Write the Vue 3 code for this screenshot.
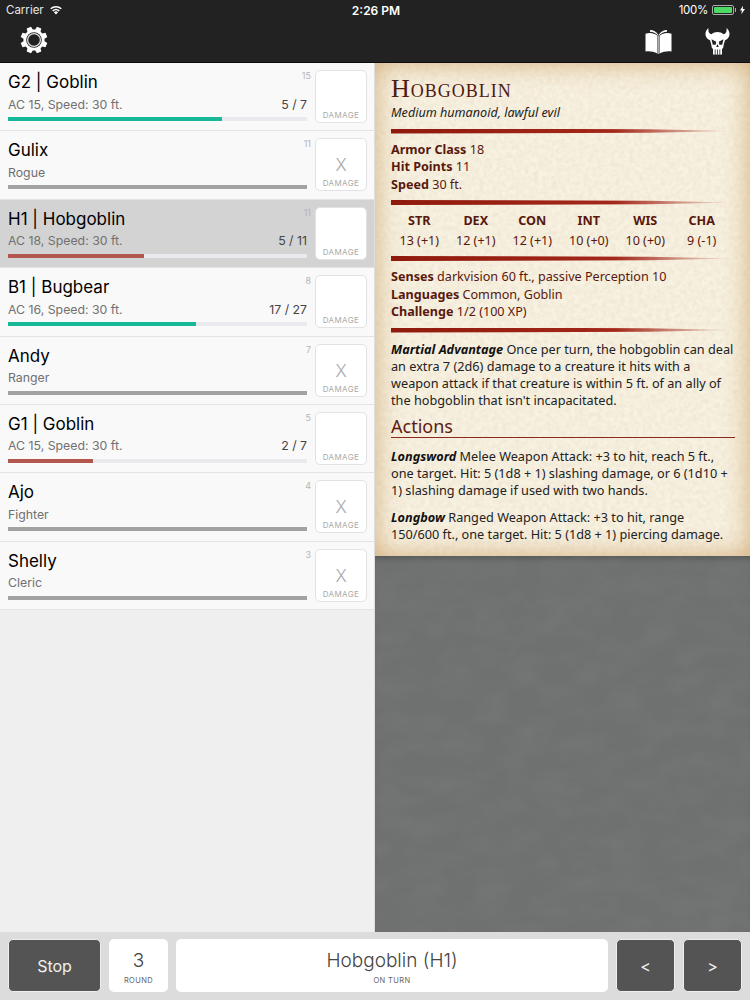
<template>
  <div class="app">
    <header class="top">
      <div class="status">
        <div class="status-left">
          <span>Carrier</span>
          <svg class="wifi" width="14" height="10" viewBox="0 0 14 10">
            <path d="M7 9.600 4.900 7.200a3 3 0 0 1 4.200 0Z" fill="#fff" />
            <path d="M3.700 5.900a5 5 0 0 1 6.600 0" stroke="#fff" stroke-width="1.500" fill="none" />
            <path d="M1.700 3.700a8 8 0 0 1 10.600 0" stroke="#fff" stroke-width="1.500" fill="none" />
          </svg>
        </div>
        <div class="clock">2:26 PM</div>
        <div class="status-right">
          <span class="percent">100%</span>
          <span class="battery"><i></i></span>
          <span class="nub"></span>
          <svg class="bolt" width="5" height="10" viewBox="0 0 6 10"><path d="M3.600 0 0 5.600h2.300L1.600 10 6 3.800H3.400Z" fill="#fff" /></svg>
        </div>
      </div>
      <div class="toolbar">
        <svg class="gear" width="28" height="28" viewBox="0 0 28 28">
          <path :d="gearPath" fill="#fff" />
          <circle cx="14" cy="14" r="7.800" fill="#222" />
          <circle cx="14" cy="14" r="6.400" fill="none" stroke="#ddd" stroke-width="1.300" />
        </svg>
        <div class="toolbar-right">
          <svg width="27" height="25" viewBox="0 0 27 25">
            <path d="M.5 4.800C4 3.500 9 3.500 12.400 6.800V24.500C9 22.500 4 22 .5 22.500Z" fill="#fff" />
            <path d="M26.500 4.800C23 3.500 18 3.500 14.600 6.800V24.500C18 22.500 23 22 26.500 22.500Z" fill="#fff" />
            <path d="M5 1C8.500 1 11.500 2.500 13.200 5.800V6.800C11 4 8 2.800 5 2.800ZM22 1C18.500 1 15.500 2.500 13.800 5.800V6.800C16 4 19 2.800 22 2.800Z" fill="#fff" />
            <rect x="12.600" y="6.500" width="1.800" height="18.500" fill="#aaa" />
          </svg>
          <svg class="skull" width="25" height="27" viewBox="0 0 25 27">
            <path d="M3.500 0C.5 2.500-.5 6.500 1.500 9.500C2.500 11 3.800 11.800 5 12.200L6 15.500 7 20.500H18L19 15.500 20 12.200C21.200 11.800 22.500 11 23.500 9.500C25.500 6.500 24.500 2.500 21.500 0C22 3.500 21 5.500 18.500 6.300C16.800 4.800 14.800 4 12.500 4S8.200 4.800 6.500 6.300C4 5.500 3 3.500 3.500 0Z" fill="#fff" />
            <path d="M8 20h9v6.500H8Z" fill="#fff" />
            <path d="M6.500 11.300 11.200 13.800 10.700 16.800H7.800ZM18.500 11.300 13.800 13.800 14.300 16.800H17.200ZM12.500 16 13.800 19H11.200Z" fill="#222" />
            <path d="M10.200 21.500v5M12.500 21.500v5M14.800 21.500v5" stroke="#222" stroke-width=".8" />
          </svg>
        </div>
      </div>
    </header>

    <main class="main">
      <section class="list">
        <div v-for="c in combatants" :key="c.name" class="row" :class="{ active: c.active }">
          <div class="row-info">
            <div class="name">{{ c.name }}</div>
            <div class="sub-line">
              <span>{{ c.sub }}</span>
              <span v-if="c.hp" class="hp">{{ c.hp }} / {{ c.max }}</span>
            </div>
            <div class="track">
              <div class="fill" :class="barClass(c)" :style="{ width: barWidth(c) }"></div>
            </div>
          </div>
          <div class="init">{{ c.init }}</div>
          <div class="damage">
            <span class="x">{{ c.hp ? '' : 'X' }}</span>
            <span class="damage-label">DAMAGE</span>
          </div>
        </div>
      </section>

      <section class="detail">
        <article class="sheet">
          <svg class="grain" width="100%" height="100%">
            <filter id="paper">
              <feTurbulence type="fractalNoise" baseFrequency="0.22" numOctaves="3" seed="4" />
              <feColorMatrix values="0 0 0 0 0.55  0 0 0 0 0.42  0 0 0 0 0.25  0.2 0.2 0 0 -0.14" />
            </filter>
            <rect width="100%" height="100%" filter="url(#paper)" />
          </svg>
          <div class="sheet-body">
            <h1>Hobgoblin</h1>
            <p class="kind">Medium humanoid, lawful evil</p>
            <div class="rule"></div>
            <p class="prop"><b>Armor Class</b> 18</p>
            <p class="prop"><b>Hit Points</b> 11</p>
            <p class="prop"><b>Speed</b> 30 ft.</p>
            <div class="rule"></div>
            <div class="stats">
              <div v-for="s in stats" :key="s.k" class="stat">
                <b>{{ s.k }}</b>
                <span>{{ s.v }}</span>
              </div>
            </div>
            <div class="rule"></div>
            <p class="prop"><b>Senses</b> darkvision 60 ft., passive Perception 10</p>
            <p class="prop"><b>Languages</b> Common, Goblin</p>
            <p class="prop"><b>Challenge</b> 1/2 (100 XP)</p>
            <div class="rule last"></div>
            <p class="trait"><b><i>Martial Advantage</i></b> Once per turn, the hobgoblin can deal an extra 7 (2d6) damage to a creature it hits with a weapon attack if that creature is within 5 ft. of an ally of the hobgoblin that isn't incapacitated.</p>
            <h2>Actions</h2>
            <p class="trait"><b><i>Longsword</i></b> Melee Weapon Attack: +3 to hit, reach 5 ft., one target. Hit: 5 (1d8 + 1) slashing damage, or 6 (1d10 + 1) slashing damage if used with two hands.</p>
            <p class="trait"><b><i>Longbow</i></b> Ranged Weapon Attack: +3 to hit, range 150/600 ft., one target. Hit: 5 (1d8 + 1) piercing damage.</p>
          </div>
        </article>
        <div class="slate">
          <svg class="grain" width="100%" height="100%">
            <filter id="slate">
              <feTurbulence type="fractalNoise" baseFrequency="0.03 0.05" numOctaves="5" seed="9" />
              <feColorMatrix values="0 0 0 0 0.25  0 0 0 0 0.25  0 0 0 0 0.25  0.25 0.25 0 0 -0.2" />
            </filter>
            <rect width="100%" height="100%" filter="url(#slate)" />
          </svg>
        </div>
      </section>
    </main>

    <footer class="bottom">
      <button class="btn stop">Stop</button>
      <div class="panel round">
        <div class="value">3</div>
        <div class="caption">ROUND</div>
      </div>
      <div class="panel turn">
        <div class="value">Hobgoblin (H1)</div>
        <div class="caption">ON TURN</div>
      </div>
      <button class="btn nav">&lt;</button>
      <button class="btn nav">&gt;</button>
    </footer>
  </div>
</template>

<script setup>
const combatants = [
  { name: 'G2 | Goblin', sub: 'AC 15, Speed: 30 ft.', hp: 5, max: 7, init: 15 },
  { name: 'Gulix', sub: 'Rogue', init: 11 },
  { name: 'H1 | Hobgoblin', sub: 'AC 18, Speed: 30 ft.', hp: 5, max: 11, init: 11, active: true },
  { name: 'B1 | Bugbear', sub: 'AC 16, Speed: 30 ft.', hp: 17, max: 27, init: 8 },
  { name: 'Andy', sub: 'Ranger', init: 7 },
  { name: 'G1 | Goblin', sub: 'AC 15, Speed: 30 ft.', hp: 2, max: 7, init: 5 },
  { name: 'Ajo', sub: 'Fighter', init: 4 },
  { name: 'Shelly', sub: 'Cleric', init: 3 }
]

const stats = [
  { k: 'STR', v: '13 (+1)' },
  { k: 'DEX', v: '12 (+1)' },
  { k: 'CON', v: '12 (+1)' },
  { k: 'INT', v: '10 (+0)' },
  { k: 'WIS', v: '10 (+0)' },
  { k: 'CHA', v: '9 (-1)' }
]

const barWidth = (c) => (c.hp ? (c.hp / c.max) * 100 + '%' : '100%')

const barClass = (c) => {
  if (!c.hp) return 'pc'
  return c.hp / c.max < 0.5 ? 'hurt' : 'ok'
}

// 8 tooth gear outline
const gearPath = (() => {
  const pts = []
  for (let i = 0; i < 8; i++) {
    const a = (i * Math.PI) / 4 - Math.PI / 8
    const steps = [[-0.28, 10.6], [-0.17, 13.6], [0.17, 13.6], [0.28, 10.6]]
    for (const [off, r] of steps) {
      pts.push((14 + r * Math.cos(a + off)).toFixed(2) + ' ' + (14 + r * Math.sin(a + off)).toFixed(2))
    }
  }
  return 'M' + pts.join('L') + 'Z'
})()
</script>

<style>
html, body {
  margin: 0;
  background: #efefef;
}
</style>

<style scoped>
.app {
  width: 750px;
  height: 1000px;
  display: flex;
  flex-direction: column;
  overflow: hidden;
  font-family: Inter, "Liberation Sans", sans-serif;
}

.top {
  height: 63px;
  flex: none;
  background: #222;
  border-bottom: 1px solid #0c0c0c;
  box-sizing: border-box;
  color: #fff;
}
.status {
  height: 20px;
  padding: 0 5px 0 6px;
  display: grid;
  grid-template-columns: 1fr auto 1fr;
  align-items: center;
  font-size: 11.5px;
}
.status-left {
  display: flex;
  align-items: center;
  gap: 5px;
  color: #e6e6e6;
}
.clock {
  font-weight: 600;
  font-size: 12px;
  margin-left: 1px;
}
.status-right {
  display: flex;
  align-items: center;
  justify-content: flex-end;
}
.percent {
  letter-spacing: -0.3px;
}
.battery {
  width: 22px;
  height: 10px;
  margin-left: 4px;
  box-sizing: border-box;
  border: 1px solid #aaa;
  border-radius: 2px;
  padding: 1px;
  display: block;
}
.battery i {
  display: block;
  height: 100%;
  background: #4cd964;
  border-radius: 1px;
}
.nub {
  width: 1px;
  height: 4px;
  background: #aaa;
  margin: 0 4px 0 1px;
}
.toolbar {
  height: 42px;
  padding: 0 20px 0 20px;
  display: flex;
  justify-content: space-between;
  align-items: center;
}
.gear {
  margin-bottom: 2px;
}
.toolbar-right {
  display: flex;
  align-items: center;
  gap: 33px;
}

.main {
  flex: 1;
  display: flex;
  min-height: 0;
}

.list {
  width: 375px;
  flex: none;
  background: #efefef;
  border-right: 1px solid #dedede;
  box-sizing: border-box;
}
.row {
  position: relative;
  height: 68.4px;
  box-sizing: border-box;
  padding: 0 7px 0 8px;
  background: #f9f9f9;
  border-bottom: 1px solid #e4e4e4;
  display: flex;
  gap: 8px;
}
.row.active {
  background: #d3d3d3;
}
.row-info {
  width: 299px;
  flex: none;
}
.name {
  margin-top: 7px;
  height: 24px;
  font-size: 17px;
  line-height: 24px;
  color: #000;
}
.sub-line {
  margin-top: 1px;
  height: 18px;
  display: flex;
  justify-content: space-between;
  align-items: center;
  font-size: 12.3px;
  color: #707070;
}
.hp {
  color: #444;
}
.track {
  margin-top: 4px;
  height: 4px;
  background: #e9e9ee;
}
.fill {
  height: 100%;
}
.fill.ok {
  background: #17b897;
}
.fill.hurt {
  background: #b3574e;
}
.fill.pc {
  background: #a2a2a2;
}
.init {
  position: absolute;
  right: 63px;
  top: 7px;
  font-size: 9px;
  color: #b5b5b5;
}
.damage {
  margin-top: 7px;
  width: 53px;
  height: 53px;
  box-sizing: border-box;
  background: #fff;
  border: 1px solid #e2e2e2;
  border-radius: 5px;
  display: flex;
  flex-direction: column;
  align-items: center;
  color: #aaa;
}
.x {
  margin-top: 15px;
  height: 22px;
  font-size: 17px;
  font-weight: 300;
  line-height: 22px;
}
.damage-label {
  margin-top: 2px;
  font-size: 8px;
  letter-spacing: 0.4px;
}

.detail {
  flex: 1;
  display: flex;
  flex-direction: column;
  min-width: 0;
}
.sheet {
  position: relative;
  height: 493px;
  flex: none;
  overflow: hidden;
  background: #f8f2e2;
  box-shadow: inset 0 0 26px rgba(205, 160, 100, 0.85);
}
.grain {
  position: absolute;
  inset: 0;
}
.sheet-body {
  position: relative;
  padding: 10px 16px 0 16px;
  font-family: "Noto Sans", "Open Sans", sans-serif;
  font-size: 12.6px;
  line-height: 17.5px;
  color: #58180d;
}
h1 {
  margin: 0;
  height: 31px;
  font-family: "Liberation Serif", serif;
  font-size: 26px;
  font-weight: 400;
  font-variant: small-caps;
  line-height: 31px;
  letter-spacing: 1px;
  color: #4f1a12;
}
.kind {
  margin: 0;
  font-style: italic;
  color: #222;
}
.rule {
  height: 5px;
  margin: 7px -1px 7px 0;
  background: linear-gradient(90deg, #8f1a0b 0%, #a3271a 65%, rgba(163, 39, 26, 0) 100%);
  clip-path: polygon(0 0, 75% 15%, 100% 50%, 75% 85%, 0 100%);
}
.rule.last {
  margin-bottom: 8px;
}
.prop {
  margin: 0;
}
.stats {
  display: grid;
  grid-template-columns: repeat(6, 1fr);
  margin-right: 4px;
  text-align: center;
}
.stat {
  display: flex;
  flex-direction: column;
  gap: 2px;
}
.trait {
  margin: 0 0 9px;
  line-height: 17.3px;
  font-size: 12.7px;
  color: #222;
}
.trait b {
  color: #111;
}
h2 {
  margin: -4px -1px 10px 0;
  font-size: 18px;
  line-height: 22px;
  font-weight: 400;
  color: #5e1a10;
  border-bottom: 1px solid #8a2a1c;
}

.slate {
  position: relative;
  flex: 1;
  background: #6f7070;
  box-shadow: inset 0 6px 6px -4px rgba(0, 0, 0, 0.25);
  overflow: hidden;
}

.bottom {
  height: 68px;
  flex: none;
  box-sizing: border-box;
  padding: 7px 8px 8px 8px;
  background: #dcdcdc;
  display: flex;
  gap: 8px;
}
.btn {
  border: 1px solid #eee;
  border-radius: 5px;
  background: #545454;
  color: #f0f0f0;
  font-family: inherit;
  font-size: 16px;
  padding: 0;
}
.stop {
  width: 93px;
}
.nav {
  width: 59px;
}
.panel {
  background: #fff;
  border-radius: 5px;
  text-align: center;
  color: #444;
}
.round {
  width: 59px;
}
.turn {
  flex: 1;
}
.value {
  margin-top: 10px;
  font-size: 19px;
  line-height: 24px;
  font-weight: 300;
}
.caption {
  margin-top: 3px;
  font-size: 7.5px;
  line-height: 10px;
  letter-spacing: 0.4px;
  color: #666;
}
</style>
